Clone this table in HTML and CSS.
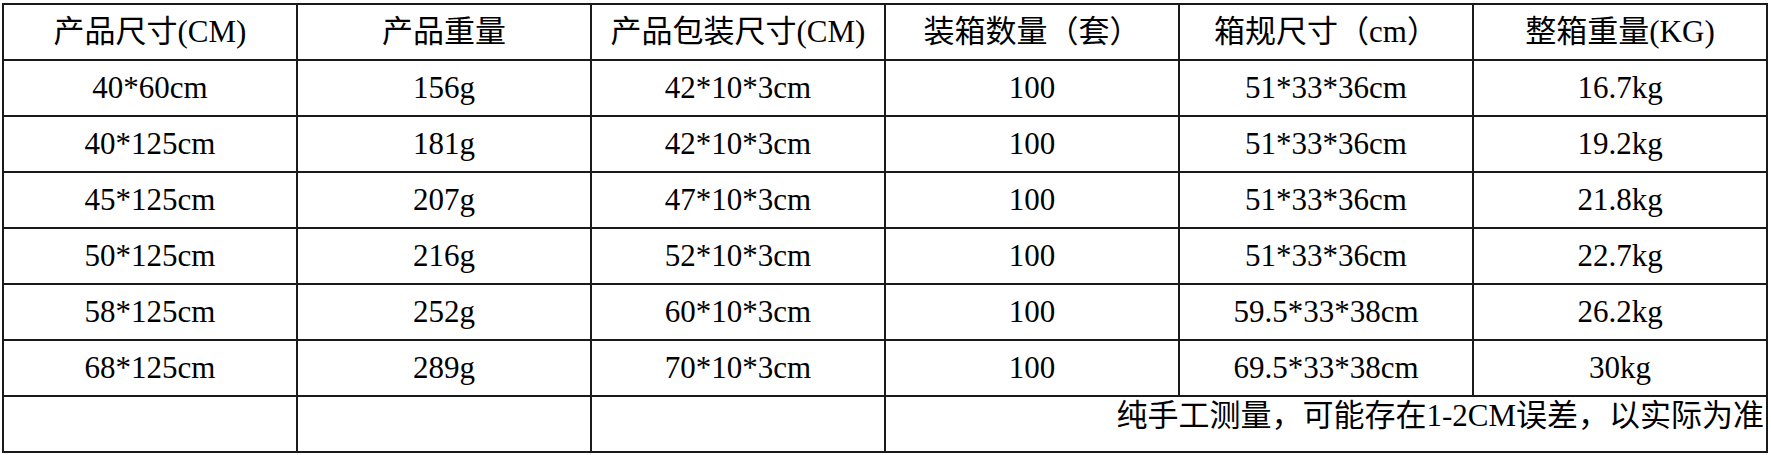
FILE: index.html
```html
<!DOCTYPE html>
<html lang="zh-CN">
<head>
<meta charset="utf-8">
<title>产品规格表</title>
<link rel="stylesheet" href="styles.css">
</head>
<body>
<table class="spec">
  <colgroup>
    <col class="c"><col class="c"><col class="c"><col class="c"><col class="c"><col class="c">
  </colgroup>
  <tr>
    <td>产品尺寸(CM)</td>
    <td>产品重量</td>
    <td>产品包装尺寸(CM)</td>
    <td>装箱数量（套）</td>
    <td>箱规尺寸（cm）</td>
    <td>整箱重量(KG)</td>
  </tr>
  <tr>
    <td>40*60cm</td><td>156g</td><td>42*10*3cm</td><td>100</td><td>51*33*36cm</td><td>16.7kg</td>
  </tr>
  <tr>
    <td>40*125cm</td><td>181g</td><td>42*10*3cm</td><td>100</td><td>51*33*36cm</td><td>19.2kg</td>
  </tr>
  <tr>
    <td>45*125cm</td><td>207g</td><td>47*10*3cm</td><td>100</td><td>51*33*36cm</td><td>21.8kg</td>
  </tr>
  <tr>
    <td>50*125cm</td><td>216g</td><td>52*10*3cm</td><td>100</td><td>51*33*36cm</td><td>22.7kg</td>
  </tr>
  <tr>
    <td>58*125cm</td><td>252g</td><td>60*10*3cm</td><td>100</td><td>59.5*33*38cm</td><td>26.2kg</td>
  </tr>
  <tr>
    <td>68*125cm</td><td>289g</td><td>70*10*3cm</td><td>100</td><td>69.5*33*38cm</td><td>30kg</td>
  </tr>
  <tr>
    <td></td><td></td><td></td>
    <td colspan="3" class="note">纯手工测量，可能存在1-2CM误差，以实际为准</td>
  </tr>
</table>
</body>
</html>
```

FILE: styles.css
```css
html, body {
  margin: 0;
  padding: 0;
  background: #ffffff;
}

body {
  padding: 3px 0 0 2px;
  font-family: "Liberation Serif", "Noto Sans CJK SC", serif;
  font-size: 31px;
  color: #000;
}

.spec {
  border-collapse: collapse;
  table-layout: fixed;
  width: 1765px;
}

.spec .c {
  width: 294px;
}

.spec tr {
  height: 56px;
}

.spec td {
  border: 2px solid #1a1a1a;
  padding: 0;
  text-align: center;
  vertical-align: middle;
  line-height: 34px;
  white-space: nowrap;
  overflow: hidden;
}

.spec td.note {
  text-align: right;
  vertical-align: top;
  padding: 2px 2px 0 0;
}
```
